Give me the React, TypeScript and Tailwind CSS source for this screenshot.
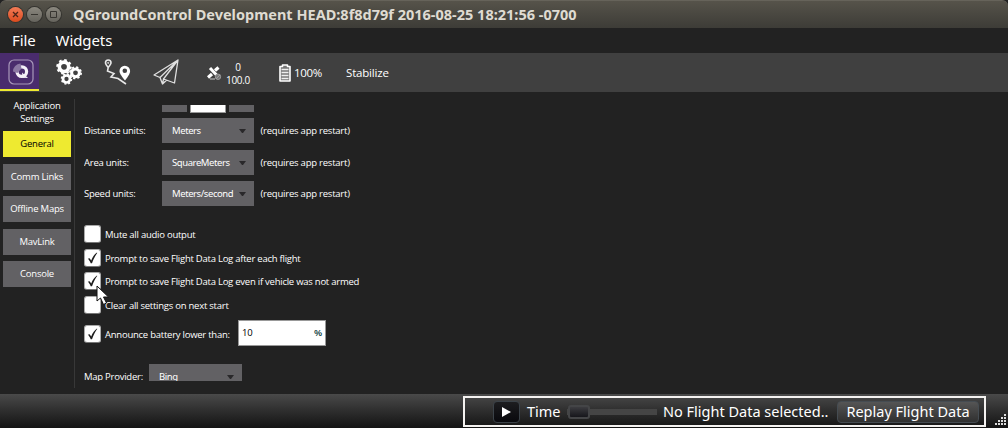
import React from "react";

const ui = "font-['Open_Sans','Noto_Sans',sans-serif]";
const sys = "font-['Noto_Sans','Open_Sans',sans-serif]";

function TitleBar() {
  const dot = "flex h-[15px] w-[15px] items-center justify-center rounded-full shadow-[0_0_0_1px_#34332f]";
  return (
    <header className="flex h-7 items-center rounded-t-md border-t border-[#66635a] bg-linear-to-b from-[#56534a] to-[#3d3c37] pl-2">
      <div className="flex gap-1">
        <span className={`${dot} bg-linear-to-b from-[#f37b55] to-[#dc4a1b]`}>
          <svg width="7" height="7" viewBox="0 0 7 7" stroke="#4a2418" strokeWidth="1.3"><path d="M1 1L6 6M6 1L1 6" /></svg>
        </span>
        <span className={`${dot} bg-linear-to-b from-[#8b887f] to-[#66645d]`}>
          <svg width="7" height="7" viewBox="0 0 7 7" stroke="#373530"><path d="M0 3.5H7" /></svg>
        </span>
        <span className={`${dot} bg-linear-to-b from-[#8b887f] to-[#66645d]`}>
          <svg width="7" height="7" viewBox="0 0 7 7" fill="none" stroke="#373530"><path d="M.5.5H6.5V6.5H.5Z" /></svg>
        </span>
      </div>
      <h1 className={`${sys} ml-3 whitespace-nowrap pb-[2px] text-[14.5px] leading-5 font-bold text-[#dfdbd2]`}>
        QGroundControl Development HEAD:8f8d79f 2016-08-25 18:21:56 -0700
      </h1>
    </header>
  );
}

const gear = (cx: number, cy: number, r: number) => (
  <g>
    <circle cx={cx} cy={cy} r={r * 0.6} strokeWidth={r * 0.46} />
    <circle cx={cx} cy={cy} r={r * 0.87} strokeWidth={r * 0.26} strokeDasharray={`${(r * 0.87 * Math.PI) / 8}`} />
  </g>
);

function Toolbar() {
  return (
    <div className={`${ui} flex h-[39px] bg-[#404040] text-white`}>
      <div className="mb-px flex w-[39px] justify-center border-b-2 border-[#eeea30] bg-[#4a2c6d] pt-[6px] pl-[2px]">
        <svg width="26" height="26" viewBox="0 0 26 26" fill="none">
          <rect x="1" y="1" width="24" height="24" rx="5" stroke="#a898ba" strokeWidth="1.2" />
          <circle cx="13.8" cy="12.6" r="4.8" stroke="#f4f0f8" strokeWidth="3.2" />
          <path d="M5 12.500A8 8 0 0 1 12.500 4.500L13.500 9.500L9.500 14Z" fill="#8b78a3" />
          <path d="M14 13.500L20 19L14.500 18.800Z" fill="#f4f0f8" />
        </svg>
      </div>
      <svg className="mt-[6px] ml-[17px]" width="26" height="26" viewBox="0 0 26 26" fill="none" stroke="#fff">
        {gear(8, 7.8, 7.8)}
        {gear(19.5, 13.8, 6.5)}
        {gear(10.5, 20, 5.8)}
      </svg>
      <svg className="mt-[6px] ml-[22px]" width="28" height="28" viewBox="0 0 28 28" fill="none" stroke="#e8e8e8">
        <path d="M4.200 8.500C2.200 6 1.500 4.800 1.500 3.700A2.700 2.700 0 0 1 7 3.700C7 4.800 6.200 6 4.200 8.500L3.500 12L10 14.500L7 18L14 19.500L22 25" strokeWidth="1.6" />
        <circle cx="4.200" cy="3.900" r=".6" />
        <path d="M21 21.500C17 16.500 15.500 14 15.500 12A5.300 5.300 0 0 1 26.100 12C26.100 14 25 16.500 21 21.500ZM20.800 9.500A2.300 2.300 0 1 0 20.800 14.100A2.300 2.300 0 1 0 20.800 9.500Z" fill="#fff" fillRule="evenodd" stroke="none" />
      </svg>
      <svg className="mt-[6px] ml-[21px]" width="27" height="27" viewBox="0 0 27 27" fill="none" stroke="#e0e0e0" strokeWidth="1.3" strokeLinejoin="round">
        <path d="M25 1L1 16L7 18.500ZM25 1L10.500 20L21.500 24ZM25 1L7 18.500L9.500 25L10.500 20M9.500 25L13.500 21.200" />
      </svg>
      <div className="flex w-[98px] items-start pt-[8px] pl-[27px]">
        <svg className="mt-[5px]" width="15" height="15" viewBox="0 0 15 15" fill="none">
          <path d="M3 2L10 9.500" stroke="#fff" strokeWidth="3" />
          <path d="M1 11.500L5 8M8 4.500L11.500 1.500" stroke="#fff" strokeWidth="3.2" />
          <path d="M3 13H8" stroke="#ccc" />
          <circle cx="11" cy="10.800" r="2.700" fill="#777" stroke="#999" />
          <path d="M9 12.800L13 8.800" stroke="#aaa" />
        </svg>
        <div className="ml-[4px] text-center text-[10px] leading-[13px] tracking-[-0.3px]">
          <div>0</div><div>100.0</div>
        </div>
      </div>
      <div className="flex items-center">
        <svg className="ml-px" width="12" height="18" viewBox="0 0 12 18" fill="none">
          <path d="M3.500 1H8.500V2.500H11V17H1V2.500H3.500Z" fill="#777" stroke="#fff" strokeWidth="1.600" strokeLinejoin="round" />
          <path d="M2.500 5.500H9.500M2.500 8.500H9.500M2.500 11.500H9.500M2.500 14.500H9.500" stroke="#eee" strokeWidth="1.400" />
        </svg>
        <span className="ml-[3px] text-[11.5px] tracking-[-0.3px]">100%</span>
        <span className="ml-[24px] text-[11.5px] tracking-[-0.2px]">Stabilize</span>
      </div>
    </div>
  );
}

function Combo({ value, className = "" }: { value: string; className?: string }) {
  return (
    <div className={`${sys} flex h-[25px] w-[92px] shrink-0 items-center justify-between bg-[#626164] pr-2 pl-[10px] text-[9.5px] tracking-[-0.42px] text-white ${className}`}>
      <span className="pt-[2px]">{value}</span>
      <svg width="7" height="4" viewBox="0 0 7 4" fill="#29282a"><path d="M0 0H7L4 4H3Z" /></svg>
    </div>
  );
}

function UnitRow({ label, value, className = "" }: { label: string; value: string; className?: string }) {
  return (
    <div className={`flex h-[25px] items-center ${className}`}>
      <span className="w-[78px] pt-[2px]">{label}</span>
      <Combo value={value} />
      <span className="ml-[6.5px] pt-[2px] tracking-[-0.22px]">(requires app restart)</span>
    </div>
  );
}

function Check({ checked, label, className = "" }: { checked?: boolean; label: string; className?: string }) {
  return (
    <label className={`flex h-[18px] items-center whitespace-nowrap ${className}`}>
      <span className="flex h-[18px] w-[17px] items-center justify-center rounded-[3px] border border-[#aaa] border-b-[#777] bg-white">
        {checked && (
          <svg width="11" height="12" viewBox="0 0 11 12" fill="#1d1d1d"><path d="M.8 6.800L2.600 6.200L4.200 8.600C5.800 4.500 7.500 2.200 10 .5L10.200 1C8.300 3.600 6.500 7 5 11.300H3.700C3 9.300 2 7.800.8 6.800Z" /></svg>
        )}
      </span>
      <span className="ml-1 pt-[2px]">{label}</span>
    </label>
  );
}

function Sidebar() {
  const btn = "flex h-[26px] items-center justify-center";
  const idle = `${btn} bg-[#626164] text-white`;
  return (
    <nav className="flex w-[71px] shrink-0 flex-col pt-[7px] pl-[3px] text-[9.5px] tracking-[-0.22px]">
      <h2 className="h-8 text-center leading-[13px]">Application<br />Settings</h2>
      <div className={`${btn} bg-[#eeea30] text-black`}>General</div>
      <div className={`${idle} mt-[7px]`}>Comm Links</div>
      <div className={`${idle} mt-[6px]`}>Offline Maps</div>
      <div className={`${idle} mt-[7px]`}>MavLink</div>
      <div className={`${idle} mt-[6px]`}>Console</div>
    </nav>
  );
}

function Settings() {
  return (
    <section className="mt-[13px] ml-[9px] h-[276px] w-[340px] overflow-hidden text-[9.5px] tracking-[-0.245px]">
      <div className="ml-[78px] flex h-2 gap-[3px]">
        <div className="h-[7px] w-[25px] bg-[#626164]" />
        <div className="h-2 w-9 border-x border-b border-[#999] bg-white" />
        <div className="h-[7px] w-[25px] bg-[#626164]" />
      </div>
      <UnitRow className="mt-[5px]" label="Distance units:" value="Meters" />
      <UnitRow className="mt-[7px]" label="Area units:" value="SquareMeters" />
      <UnitRow className="mt-[6px]" label="Speed units:" value="Meters/second" />
      <Check className="mt-[19px]" label="Mute all audio output" />
      <Check className="mt-[6px]" checked label="Prompt to save Flight Data Log after each flight" />
      <Check className="mt-[5px]" checked label="Prompt to save Flight Data Log even if vehicle was not armed" />
      <Check className="mt-[6px]" label="Clear all settings on next start" />
      <div className="mt-[6px] flex items-center">
        <Check checked className="w-[154px] pt-[2px]" label="Announce battery lower than:" />
        <div className="flex h-[26px] w-[88px] items-center justify-between border border-[#999] bg-white px-[3px] text-black">
          <span>10</span><span className="font-semibold text-[#123f3f]">%</span>
        </div>
      </div>
      <div className="mt-[18px] flex items-center">
        <span className="w-[65px] pt-[2px]">Map Provider:</span>
        <Combo className="w-[93px]" value="Bing" />
      </div>
    </section>
  );
}

function StatusBar() {
  return (
    <footer className={`${sys} flex h-[34px] justify-end bg-linear-to-b from-[#4a4a4a] to-[#141414] pt-[2px] text-[14.5px] text-white`}>
      <div className="flex h-[31px] w-[523px] items-center border-2 border-[#f4f2f0] pl-[28px] whitespace-nowrap">
        <div className="flex h-[22px] w-[27px] items-center justify-center rounded border border-[#3b4248] bg-linear-to-b from-[#1d1d1f] to-[#09090d]">
          <svg width="9" height="10" viewBox="0 0 9 10" fill="#fff"><path d="M0 0L9 5L0 10Z" /></svg>
        </div>
        <span className="ml-[7px] w-[40px]">Time</span>
        <div className="flex h-[6px] w-[90px] items-center bg-[#454545]">
          <div className="ml-px h-[14px] w-[22px] rounded-[3px] border-2 border-[#444547] bg-linear-to-b from-[#3c3c40] to-[#17171c]" />
        </div>
        <span className="ml-[6px] w-[174px]">No Flight Data selected..</span>
        <div className="flex h-[22px] w-[142px] items-center justify-center rounded border border-[#454c52] bg-linear-to-b from-[#555] to-[#303030]">Replay Flight Data</div>
      </div>
      <svg className="mt-[18px] mr-[2px] ml-[9px]" width="11" height="12" viewBox="0 0 11 12" fill="#ddd">
        <path d="M9 0h2v2H9zM6 3h2v2H6zM9 3h2v2H9zM3 6h2v2H3zM6 6h2v2H6zM9 6h2v2H9zM0 9h2v2H0zM3 9h2v2H3zM6 9h2v2H6zM9 9h2v2H9z" />
      </svg>
    </footer>
  );
}

export default function App() {
  return (
    <div className="relative h-[428px] w-[1008px] overflow-hidden bg-[#222]">
      <TitleBar />
      <div className={`${sys} flex h-[25px] items-center gap-[20px] pl-3 text-[15px] tracking-[-0.1px] text-white`}>
        <span>File</span><span>Widgets</span>
      </div>
      <Toolbar />
      <main className={`${ui} flex h-[302px] text-white`}>
        <Sidebar />
        <div className="mt-[7px] ml-[3px] h-[289px] w-px bg-[#383838]" />
        <Settings />
      </main>
      <StatusBar />
      <svg className="absolute top-[285px] left-[96px]" width="14" height="21" viewBox="0 0 14 21" fill="#fff" stroke="#111">
        <path d="M1 1V16L4.500 13L7.500 19.500L10.500 18L7.500 12H12.500Z" />
      </svg>
    </div>
  );
}
